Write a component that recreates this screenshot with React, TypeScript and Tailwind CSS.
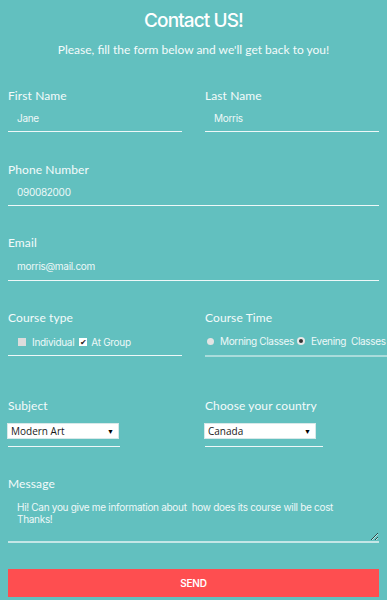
import { useState } from 'react'

const label = "block text-[12px] leading-4 text-[#f4fbfb] font-['Lato',sans-serif] tracking-[0.1px]"
const field =
  "block w-full h-[28px] pl-[9px] bg-transparent border-0 border-b border-[#eef8f8] text-[10px] text-[#eef8f8] font-['Inter',sans-serif] tracking-[-0.3px] outline-none"

function Select({ value, width }: { value: string; width: string }) {
  return (
    <div className={`${width} mt-[10px] pb-[8px] border-b border-[#eef8f8]`}>
      <div className="w-[110px] h-[14px] bg-white flex items-center justify-between pl-[3px] pr-[4px] shadow-[0_0_0_1px_#d7e9e9]">
        <span className="text-[10px] leading-none text-[#1a1a1a] font-['Open_Sans',sans-serif]">{value}</span>
        <span className="text-[7px] leading-none text-black">▼</span>
      </div>
    </div>
  )
}

export default function App() {
  const [message, setMessage] = useState(
    'Hi! Can you give me information about  how does its course will be cost\nThanks!',
  )

  return (
    <div className="min-h-[600px] bg-[#62c0bf] px-2 pb-[4px]">
      {/* Header */}
      <h1 className="pt-[9px] text-center text-[19px] leading-6 font-medium text-white font-['Inter',sans-serif] tracking-[-0.9px]">
        Contact US!
      </h1>
      <p className="mt-[9px] text-center text-[12px] leading-4 text-[#f4fbfb] font-['Lato',sans-serif]">
        Please, fill the form below and we'll get back to you!
      </p>

      {/* Names */}
      <div className="mt-[30px] grid grid-cols-2 gap-x-[23px]">
        <div>
          <label className={label}>First Name</label>
          <input className={field} defaultValue="Jane" />
        </div>
        <div>
          <label className={label}>Last Name</label>
          <input className={field} defaultValue="Morris" />
        </div>
      </div>

      <div className="mt-[30px]">
        <label className={label}>Phone Number</label>
        <input className={field} defaultValue="090082000" />
      </div>

      <div className="mt-[29px]">
        <label className={label}>Email</label>
        <input className={`${field} h-[30px]`} defaultValue="morris@mail.com" />
      </div>

      {/* Course */}
      <div className="mt-[29px] grid grid-cols-2 gap-x-[23px]">
        <div>
          <label className={label}>Course type</label>
          <div className="h-[30px] pt-[3px] pl-[10px] flex items-center border-b border-[#eef8f8] text-[10px] text-[#eef8f8] font-['Inter',sans-serif] tracking-[-0.3px]">
            <span className="shrink-0 mr-[6px] w-[8px] h-[8px] bg-[#dcdcdc]" />
            <span>Individual</span>
            <span className="shrink-0 ml-[5px] mr-[4px] w-[8px] h-[8px] bg-white flex items-center justify-center text-[8px] leading-none text-[#222]">
              ✔
            </span>
            <span>At Group</span>
          </div>
        </div>
        <div>
          <label className={label}>Course Time</label>
          <div className="w-[182px] h-[31px] pt-[1px] pl-[2px] flex items-center border-b-2 border-[#a9dcdb] text-[10px] text-[#eef8f8] font-['Inter',sans-serif] tracking-[-0.35px] whitespace-nowrap">
            <span className="shrink-0 mr-[6px] w-[7px] h-[7px] rounded-full bg-[#e3e3e3]" />
            <span className="shrink-0">Morning Classes</span>
            <span className="shrink-0 ml-[3px] mr-[6px] w-[8px] h-[8px] rounded-full bg-[#e8e8e8] flex items-center justify-center">
              <span className="w-[4px] h-[4px] rounded-full bg-[#333]" />
            </span>
            <span className="shrink-0">Evening&nbsp; Classes</span>
          </div>
        </div>
      </div>

      {/* Selects */}
      <div className="mt-[41px] grid grid-cols-2 gap-x-[23px]">
        <div>
          <label className={label}>Subject</label>
          <Select value="Modern Art" width="w-[112px]" />
        </div>
        <div>
          <label className={label}>Choose your country</label>
          <Select value="Canada" width="w-[118px]" />
        </div>
      </div>

      {/* Message */}
      <div className="mt-[29px]">
        <label className={label}>Message</label>
        <textarea
          className="block w-full h-[49px] mt-[2px] pl-[9px] pt-[8px] bg-transparent border-0 border-b-2 border-[#c4e6e6] text-[10px] leading-[11.5px] text-[#eef8f8] font-['Inter',sans-serif] tracking-[-0.3px] outline-none"
          value={message}
          onChange={(e) => setMessage(e.target.value)}
        />
      </div>

      <button className="mt-[26px] w-full h-[28px] bg-[#fe4e50] text-white text-[10px] font-semibold font-['Inter',sans-serif] tracking-[-0.2px]">
        SEND
      </button>
    </div>
  )
}
